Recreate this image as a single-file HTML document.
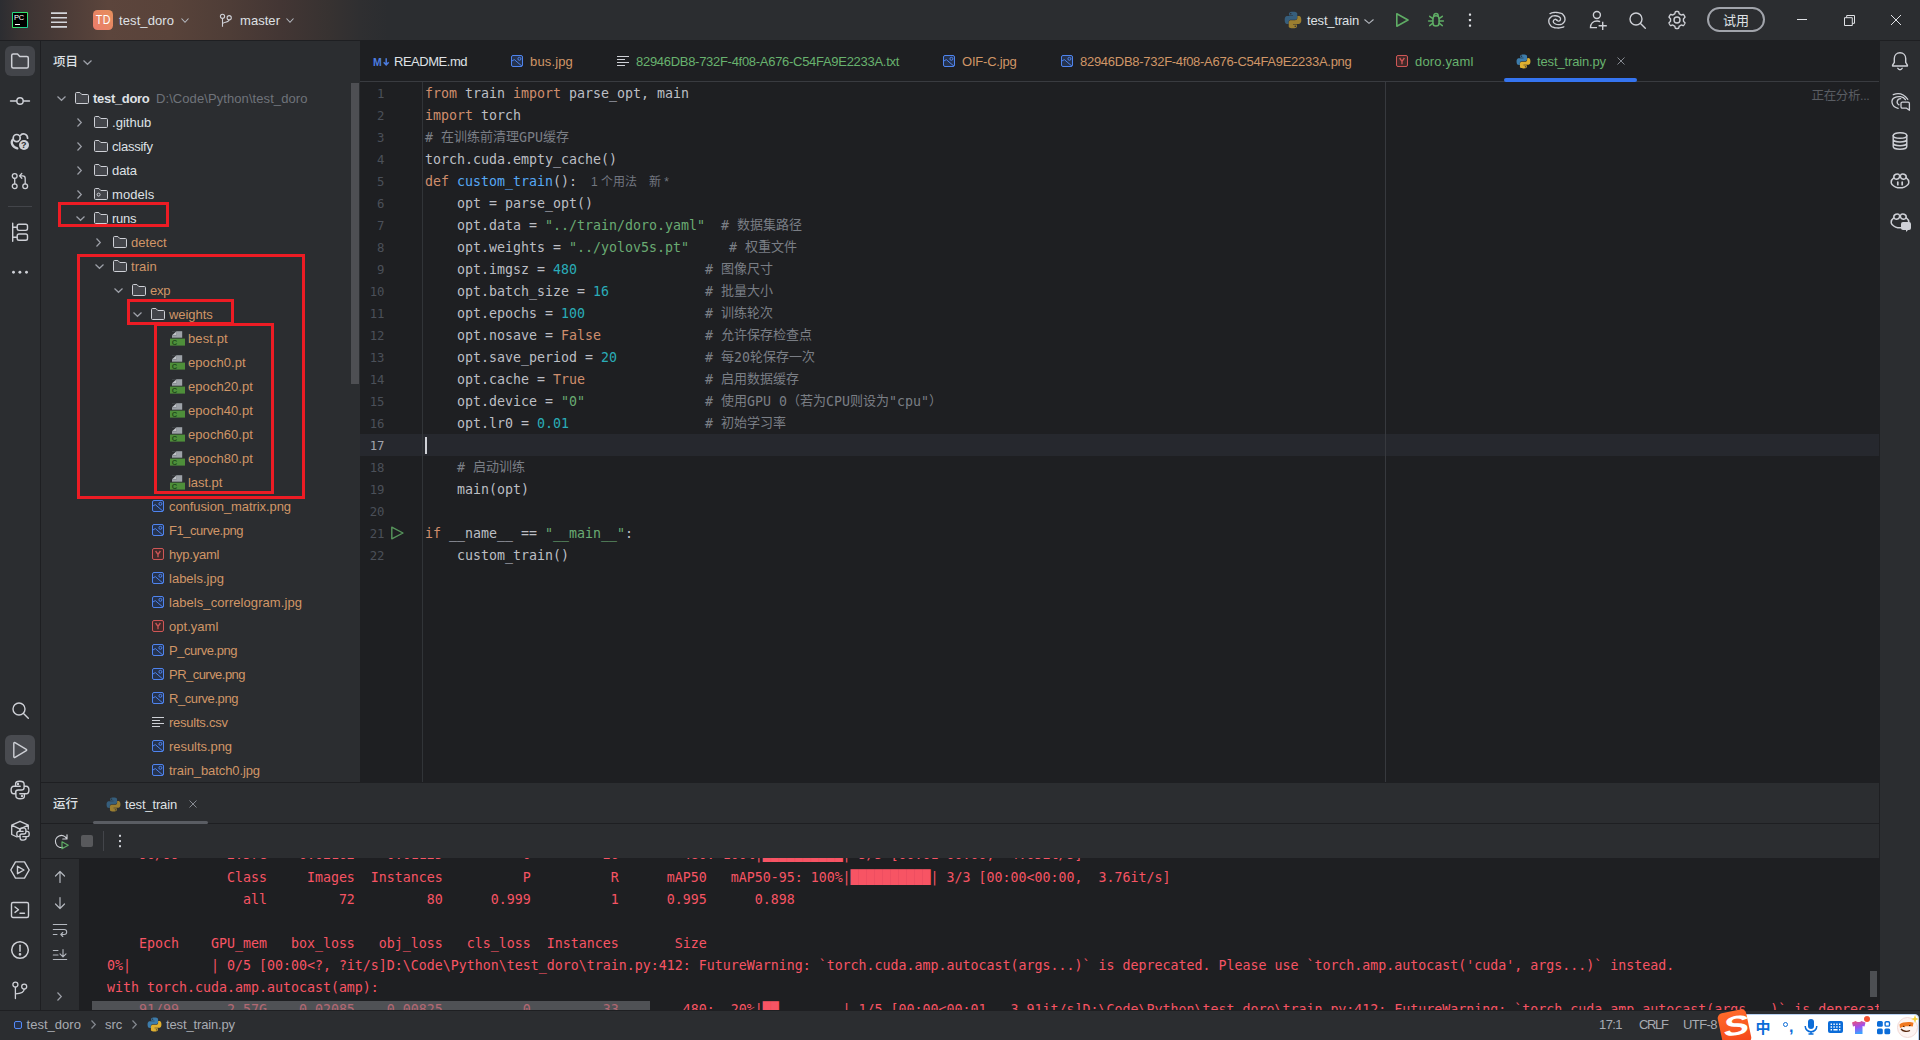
<!DOCTYPE html>
<html lang="zh"><head><meta charset="utf-8"><title>test_doro – test_train.py</title>
<style>
*{box-sizing:border-box;margin:0;padding:0}
html,body{width:1920px;height:1040px;overflow:hidden;background:#2b2d30}
body{position:relative;font-family:"Liberation Sans","Noto Sans CJK SC",sans-serif;font-size:13px;color:#dfe1e5;-webkit-font-smoothing:antialiased}
.a{position:absolute}
.t{position:absolute;white-space:pre;line-height:20px;height:20px}
.m{font-family:"DejaVu Sans Mono","Noto Sans CJK SC",monospace;font-size:13.29px}
.code{position:absolute;left:425px;white-space:pre;height:22px;line-height:22px;color:#bcbec4}
.code span.z{font-size:13px;position:relative;top:-0.6px}
.ln{position:absolute;left:360px;width:24.5px;text-align:right;height:22px;line-height:22px;color:#4b5059}
.con{position:absolute;left:91px;white-space:pre;height:22px;line-height:22px;color:#f75464}
.k{color:#cf8e6d}.s{color:#6aab73}.n{color:#2aacb8}.c{color:#7a7e85}.f{color:#56a8f5}.h{color:#727680;font-family:"Liberation Sans","Noto Sans CJK SC",sans-serif;font-size:12px}
svg{position:absolute;overflow:visible}
</style></head><body>
<div class="a" style="left:0px;top:0px;width:1920px;height:40px;background:linear-gradient(90deg,#2c2d31 0px,#3a3333 20px,#4a3b37 60px,#5c453c 108px,#59433a 170px,#4e3d37 230px,#433634 280px,#373231 330px,#2f2f31 360px,#2b2d30 388px);"></div>
<div class="a" style="left:0px;top:40px;width:1920px;height:1px;background:#1e1f22;"></div>
<div class="a" style="left:0px;top:41px;width:40px;height:969px;background:#2b2d30;"></div>
<div class="a" style="left:40px;top:41px;width:1px;height:969px;background:#1e1f22;"></div>
<div class="a" style="left:41px;top:41px;width:319px;height:741px;background:#2b2d30;"></div>
<div class="a" style="left:360px;top:41px;width:1520px;height:741px;background:#1e1f22;"></div>
<div class="a" style="left:360px;top:81px;width:1520px;height:1px;background:#393b40;"></div>
<div class="a" style="left:1880px;top:41px;width:40px;height:969px;background:#2b2d30;"></div>
<div class="a" style="left:1879px;top:41px;width:1px;height:969px;background:#1e1f22;"></div>
<div class="a" style="left:41px;top:782px;width:1838px;height:1px;background:#1e1f22;"></div>
<div class="a" style="left:41px;top:783px;width:1838px;height:227px;background:#2b2d30;"></div>
<div class="a" style="left:41px;top:823px;width:1838px;height:1px;background:#1e1f22;"></div>
<div class="a" style="left:79px;top:858px;width:1800px;height:152px;background:#1e1f22;"></div>
<div class="a" style="left:0px;top:1010px;width:1920px;height:1px;background:#1e1f22;"></div>
<div class="a" style="left:0px;top:1011px;width:1920px;height:29px;background:#2b2d30;"></div>
<!-- title bar -->
<div class="a" style="left:12px;top:12px;width:16px;height:16px;background:linear-gradient(135deg,#21d789,#3bea62 50%,#17c9a0);border-radius:1px"></div><div class="a" style="left:13px;top:13px;width:14px;height:14px;background:#000"></div><div class="a" style="left:14px;top:12.5px;font-size:7.500px;line-height:9px;color:#fff;letter-spacing:-0.200px">PC</div><div class="a" style="left:15px;top:24px;width:5px;height:1px;background:#fff;"></div>
<svg style="left:51px;top:12px" width="16" height="16" viewBox="0 0 16 16" fill="none"><path d="M0 1.100H16M0 5.800H16M0 10.200H16M0 14.900H16" stroke="#d4d6db" stroke-width="1.600"/></svg>
<div class="a" style="left:93px;top:10px;width:20px;height:20px;border-radius:4.5px;background:linear-gradient(45deg,#ea7c6c,#e58f5b);color:#fff;font-size:13px;line-height:20px;text-align:center;letter-spacing:0.6px"><span style="display:inline-block;transform:scaleX(0.82)">TD</span></div>
<div class="t " style="left:119px;top:11px;color:#dfe1e5;letter-spacing:0.1px;">test_doro</div>
<svg style="left:180.5px;top:18.0px" width="8" height="5" viewBox="0 0 8 5" fill="none"><path d="M0.5 0.5 L4.0 4.3 L7.5 0.5" stroke="#b4b8bf" stroke-width="1.1"/></svg>
<svg style="left:219px;top:12px" width="14" height="16" viewBox="0 0 14 16" fill="none"><circle cx="3.500" cy="4.300" r="2.100" stroke="#ced0d6" stroke-width="1.100"/><circle cx="10.200" cy="5.700" r="2.100" stroke="#ced0d6" stroke-width="1.100"/><path d="M3.500 6.400V14.800M10.200 7.800c0 3.200-6.700 1.600-6.700 4.200" stroke="#ced0d6" stroke-width="1.100"/></svg>
<div class="t " style="left:240px;top:11px;color:#dfe1e5;letter-spacing:0.05px;">master</div>
<svg style="left:286px;top:18.0px" width="8" height="5" viewBox="0 0 8 5" fill="none"><path d="M0.5 0.5 L4.0 4.3 L7.5 0.5" stroke="#b4b8bf" stroke-width="1.1"/></svg>
<svg style="left:1284px;top:11px" width="18" height="18" viewBox="0 0 16 16" fill="none"><g opacity="0.62"><path d="M7.9 0.6c-3.6 0-3.4 1.6-3.4 1.6v1.7h3.5v.6H3.1S0.6 4.2 0.6 8s2.2 3.6 2.2 3.6h1.3V9.9s-.1-2.2 2.1-2.2h3.6s2 0 2-2V2.500S12.200 0.600 7.900 0.600zM6 1.700a.65.65 0 1 1 0 1.300.65.65 0 0 1 0-1.300z" fill="#3d7cab"/><path d="M8.100 15.400c3.600 0 3.400-1.600 3.400-1.600v-1.700H8v-.6h4.900s2.500.300 2.500-3.500-2.200-3.600-2.200-3.600h-1.300v1.700s.1 2.200-2.100 2.200H6.200s-2 0-2 2v3.200s-.4 1.900 3.900 1.900zm1.900-1.100a.65.65 0 1 1 0-1.300.65.65 0 0 1 0 1.300z" fill="#e0b030"/></g></svg>
<div class="t " style="left:1307px;top:11px;color:#dfe1e5;letter-spacing:-0.15px;">test_train</div>
<svg style="left:1364px;top:18.5px" width="10" height="5" viewBox="0 0 10 5" fill="none"><path d="M0.5 0.5 L5.0 4.3 L9.5 0.5" stroke="#b4b8bf" stroke-width="1.1"/></svg>
<svg style="left:1394px;top:12px" width="16" height="16" viewBox="0 0 16 16" fill="none"><path d="M2.800 1.800L14 8L2.800 14.200Z" stroke="#5fad65" stroke-width="1.600" stroke-linejoin="round"/></svg>
<svg style="left:1427px;top:12px" width="18" height="16" viewBox="0 0 18 16" fill="none"><g stroke="#5fad65" stroke-width="1.500" fill="none" stroke-linecap="round"><rect x="5.900" y="3.700" width="6.200" height="10.300" rx="3.100"/><path d="M6.800 3.900C6.800 0.800 11.200 0.800 11.200 3.900"/><path d="M5.900 6.700L2.700 4.300M12.100 6.700L15.300 4.300M5.900 8.900H1.600M12.100 8.900H16.400M5.900 11.200L2.700 13.600M12.100 11.200L15.300 13.600"/></g></svg>
<svg style="left:1468px;top:12px" width="4" height="16" viewBox="0 0 4 16" fill="none"><rect x="0.900" y="1.500" width="2.200" height="2.200" rx="0.600" fill="#dfe1e5"/><rect x="0.900" y="7" width="2.200" height="2.200" rx="0.600" fill="#dfe1e5"/><rect x="0.900" y="12.500" width="2.200" height="2.200" rx="0.600" fill="#dfe1e5"/></svg>
<svg style="left:1548px;top:11px" width="18" height="18" viewBox="0 0 18 18" fill="none"><g stroke="#ced0d6" stroke-width="1.35" fill="none" stroke-linecap="round"><path d="M2.00 2.60C3.00 2.30 2.78 2.07 5.00 1.70C7.22 1.33 6.17 1.33 8.67 1.50C11.17 1.67 10.29 1.37 12.50 2.20C14.71 3.03 13.80 2.01 15.30 4.00C16.80 5.99 17.00 5.54 17.00 8.17C17.00 10.80 17.10 10.09 15.30 11.90C13.50 13.71 14.37 13.32 11.60 13.60C8.83 13.88 9.10 13.87 7.00 12.75C4.90 11.63 5.30 11.73 5.30 10.25C5.30 8.77 5.80 8.65 7.00 8.30C8.20 7.95 8.27 8.90 8.90 9.20"/><path d="M15.80 15.80C14.80 16.10 15.02 16.33 12.80 16.70C10.58 17.07 11.63 17.07 9.13 16.90C6.63 16.73 7.51 17.03 5.30 16.20C3.09 15.37 4.00 16.39 2.50 14.40C1.00 12.41 0.80 12.86 0.80 10.23C0.80 7.60 0.70 8.31 2.50 6.50C4.30 4.69 3.43 5.08 6.20 4.80C8.97 4.52 8.70 4.53 10.80 5.65C12.90 6.77 12.50 6.67 12.50 8.15C12.50 9.63 12.00 9.75 10.80 10.10C9.60 10.45 9.53 9.50 8.90 9.20"/></g></svg>
<svg style="left:1588px;top:10px" width="20" height="20" viewBox="0 0 20 20" fill="none"><g stroke="#ced0d6" stroke-width="1.4" fill="none"><circle cx="8.9" cy="5" r="3.500"/><path d="M9 17.600H2.500c0-4.200 2.800-6.600 6.600-6.600 1.100 0 2.100.2 3 .6M14.700 11.700v8.300M10.600 15.700h8.200"/></g></svg>
<svg style="left:1628px;top:11px" width="19" height="19" viewBox="0 0 19 19" fill="none"><g stroke="#ced0d6" stroke-width="1.4" fill="none" stroke-linecap="round"><circle cx="8" cy="8" r="6"/><path d="M12.500 12.500L17.300 17.300"/></g></svg>
<svg style="left:1667px;top:10px" width="20" height="20" viewBox="0 0 20 20" fill="none"><path d="M16.50 10.00 L16.49 10.28 L16.48 10.57 L16.44 10.85 L16.40 11.13 L16.77 11.50 L17.24 11.94 L17.70 12.43 L17.99 12.91 L17.85 13.25 L17.70 13.59 L17.54 13.92 L17.36 14.25 L17.17 14.57 L16.96 14.88 L16.74 15.17 L16.51 15.46 L15.95 15.45 L15.30 15.30 L14.68 15.11 L14.18 14.98 L13.96 15.16 L13.73 15.32 L13.49 15.48 L13.25 15.63 L13.00 15.77 L12.75 15.89 L12.49 16.01 L12.22 16.11 L12.08 16.61 L11.94 17.24 L11.75 17.88 L11.48 18.37 L11.11 18.43 L10.74 18.47 L10.37 18.49 L10.00 18.50 L9.63 18.49 L9.26 18.47 L8.89 18.43 L8.52 18.37 L8.25 17.88 L8.06 17.24 L7.92 16.61 L7.78 16.11 L7.51 16.01 L7.25 15.89 L7.00 15.77 L6.75 15.63 L6.51 15.48 L6.27 15.32 L6.04 15.16 L5.82 14.98 L5.32 15.11 L4.70 15.30 L4.05 15.45 L3.49 15.46 L3.26 15.17 L3.04 14.88 L2.83 14.57 L2.64 14.25 L2.46 13.92 L2.30 13.59 L2.15 13.25 L2.01 12.91 L2.30 12.43 L2.76 11.94 L3.23 11.50 L3.60 11.13 L3.56 10.85 L3.52 10.57 L3.51 10.28 L3.50 10.00 L3.51 9.72 L3.52 9.43 L3.56 9.15 L3.60 8.87 L3.23 8.50 L2.76 8.06 L2.30 7.57 L2.01 7.09 L2.15 6.75 L2.30 6.41 L2.46 6.08 L2.64 5.75 L2.83 5.43 L3.04 5.12 L3.26 4.83 L3.49 4.54 L4.05 4.55 L4.70 4.70 L5.32 4.89 L5.82 5.02 L6.04 4.84 L6.27 4.68 L6.51 4.52 L6.75 4.37 L7.00 4.23 L7.25 4.11 L7.51 3.99 L7.78 3.89 L7.92 3.39 L8.06 2.76 L8.25 2.12 L8.52 1.63 L8.89 1.57 L9.26 1.53 L9.63 1.51 L10.00 1.50 L10.37 1.51 L10.74 1.53 L11.11 1.57 L11.48 1.63 L11.75 2.12 L11.94 2.76 L12.08 3.39 L12.22 3.89 L12.49 3.99 L12.75 4.11 L13.00 4.23 L13.25 4.37 L13.49 4.52 L13.73 4.68 L13.96 4.84 L14.18 5.02 L14.68 4.89 L15.30 4.70 L15.95 4.55 L16.51 4.54 L16.74 4.83 L16.96 5.12 L17.17 5.43 L17.36 5.75 L17.54 6.08 L17.70 6.41 L17.85 6.75 L17.99 7.09 L17.70 7.57 L17.24 8.06 L16.77 8.50 L16.40 8.87 L16.44 9.15 L16.48 9.43 L16.49 9.72Z" stroke="#ced0d6" stroke-width="1.400" stroke-linejoin="round" fill="none"/><circle cx="10" cy="10" r="3" stroke="#ced0d6" stroke-width="1.400" fill="none"/></svg>
<div class="a" style="left:1707px;top:7px;width:58px;height:25px;border:2px solid #a1a4ab;border-radius:13px"></div>
<div class="t " style="left:1723px;top:11px;color:#dfe1e5;">试用</div>
<div class="a" style="left:1797px;top:19px;width:10px;height:1px;background:#dfe1e5;"></div>
<svg style="left:1843.5px;top:14.5px" width="11" height="11" viewBox="0 0 11 11" fill="none"><path d="M0.500 2.700h7.800v7.800h-7.800z M2.700 2.700v-2.200h7.800v7.800h-2.200" stroke="#dfe1e5" stroke-width="1" fill="none"/></svg>
<svg style="left:1891px;top:15px" width="10" height="10" viewBox="0 0 10 10" fill="none"><path d="M0 0L10 10M10 0L0 10" stroke="#dfe1e5" stroke-width="1"/></svg>
<!-- tool strips -->
<div class="a" style="left:5px;top:46px;width:30px;height:30px;background:#43454a;border-radius:6px"></div>
<svg style="left:10px;top:51px" width="20" height="20" viewBox="0 0 20 20" fill="none"><g stroke="#ced0d6" stroke-width="1.5" fill="none" stroke-linecap="round" stroke-linejoin="round"><path d="M1.7 4.500a1.500 1.500 0 0 1 1.500-1.500h4.300l2.300 2.500h7a1.500 1.500 0 0 1 1.500 1.500v8.500a1.500 1.500 0 0 1-1.500 1.500H3.200a1.500 1.500 0 0 1-1.500-1.500z"/></g></svg>
<svg style="left:10px;top:91px" width="20" height="20" viewBox="0 0 20 20" fill="none"><g stroke="#ced0d6" stroke-width="1.4" fill="none" stroke-linecap="round" stroke-linejoin="round"><path d="M0.500 10H6.700M13.300 10H19.500"/><circle cx="10" cy="10" r="3.200"/></g></svg>
<svg style="left:10px;top:131px" width="20" height="20" viewBox="0 0 20 20" fill="none"><g stroke="#ced0d6" stroke-width="1.7" fill="none" stroke-linecap="round" stroke-linejoin="round"><ellipse cx="6.700" cy="7.100" rx="3.500" ry="3.600"/><path d="M10.600 4.300C11.800 2 17.600 2.200 17.600 7.200"/><path d="M2.700 8.800C0.600 11.500 2 16 7.300 17.400" stroke-width="2.300"/></g></svg>
<div class="a" style="left:17.500px;top:138.500px;width:12.500px;height:12.500px;border-radius:7px;background:#2b2d30"></div><div class="a" style="left:18.500px;top:139.500px;width:10.500px;height:10.500px;border-radius:6px;background:#ced0d6;color:#2b2d30;font-size:9px;font-weight:bold;line-height:10.500px;text-align:center">?</div>
<svg style="left:10px;top:171px" width="20" height="20" viewBox="0 0 20 20" fill="none"><g stroke="#ced0d6" stroke-width="1.3" fill="none" stroke-linecap="round" stroke-linejoin="round"><circle cx="4.700" cy="5" r="2.400"/><circle cx="4.700" cy="15.200" r="2.400"/><circle cx="15.200" cy="15.200" r="2.400"/><path d="M4.700 7.400V12.800M15.200 12.800V7.500c0-1.700-1-2.600-2.600-2.600H10M11.800 2.500L9.500 4.900l2.300 2.400"/></g></svg>
<div class="a" style="left:8px;top:206px;width:24px;height:1px;background:#43454a;"></div>
<svg style="left:10px;top:222px" width="20" height="20" viewBox="0 0 20 20" fill="none"><g stroke="#ced0d6" stroke-width="1.4" fill="none" stroke-linecap="round" stroke-linejoin="round"><path d="M2.700 1.200V19.200M2.700 5.300H7M2.700 15.200H7"/><rect x="7.200" y="2.200" width="10.300" height="6.200" rx="1.800"/><rect x="7.200" y="12" width="10.300" height="6.200" rx="1.800"/></g></svg>
<svg style="left:10px;top:268px" width="20" height="8" viewBox="0 0 20 8" fill="none"><circle cx="3.500" cy="4.200" r="1.450" fill="#ced0d6"/><circle cx="9.900" cy="4.200" r="1.450" fill="#ced0d6"/><circle cx="16.500" cy="4.200" r="1.450" fill="#ced0d6"/></svg>

<svg style="left:10px;top:700px" width="20" height="20" viewBox="0 0 20 20" fill="none"><g stroke="#ced0d6" stroke-width="1.4" fill="none" stroke-linecap="round" stroke-linejoin="round"><circle cx="9" cy="9" r="6"/><path d="M13.500 13.500L18.300 18.300"/></g></svg>
<div class="a" style="left:5px;top:735px;width:30px;height:30px;background:#494b50;border-radius:6px"></div>
<svg style="left:10px;top:740px" width="20" height="20" viewBox="0 0 20 20" fill="none"><g stroke="#ced0d6" stroke-width="1.4" fill="none" stroke-linecap="round" stroke-linejoin="round"><path d="M3.800 3.300c0-.6.600-1 1.200-.7l11.300 6.700c.5.300.5 1 0 1.300L5 17.400c-.6.300-1.200-.1-1.200-.7z"/></g></svg>
<svg style="left:10px;top:780px" width="20" height="20" viewBox="0 0 20 20" fill="none"><g stroke="#ced0d6" stroke-width="1.4" fill="none" stroke-linecap="round" stroke-linejoin="round"><path d="M9.800 1.200c-2.600 0-4.200.7-4.200 2.600v2.400h4.600M9.800 1.200c2.600 0 4.300.8 4.300 2.700v3.500c0 1.500-1 2.600-2.700 2.600H8.300c-1.700 0-2.800 1.100-2.800 2.700M5.600 6.200H3.900c-1.700 0-2.800 1.400-2.800 3.800s1.100 3.800 2.800 3.800h1.600v-1.100M10.200 18.800c2.600 0 4.200-.7 4.200-2.600v-2.400H9.800M10.200 18.800c-2.600 0-4.300-.8-4.300-2.700v-3.500M14.400 13.800h1.700c1.700 0 2.800-1.400 2.800-3.800s-1.100-3.800-2.800-3.800h-1.600"/><circle cx="8" cy="3.900" r=".5" fill="#ced0d6"/><circle cx="12" cy="16.100" r=".5" fill="#ced0d6"/></g></svg>
<svg style="left:10px;top:820px" width="20" height="20" viewBox="0 0 20 20" fill="none"><g stroke="#ced0d6" stroke-width="1.3" fill="none" stroke-linecap="round" stroke-linejoin="round"><path d="M10 1.300L18.300 5.200V9M10 1.300L1.700 5.200V14.500L7 17M1.700 5.200L10 9.200L18.300 5.200M10 9.200V11"/></g></svg>
<svg style="left:16px;top:827px" width="14" height="14" viewBox="0 0 20 20" fill="none"><g stroke="#ced0d6" stroke-width="1.9" fill="none" stroke-linecap="round" stroke-linejoin="round"><path d="M9.800 1.200c-2.600 0-4.200.7-4.200 2.600v2.400h4.600M9.800 1.200c2.600 0 4.300.8 4.300 2.700v3.500c0 1.500-1 2.600-2.700 2.600H8.300c-1.700 0-2.800 1.100-2.800 2.700M5.600 6.200H3.900c-1.700 0-2.800 1.400-2.800 3.800s1.100 3.800 2.800 3.800h1.600v-1.100M10.200 18.800c2.600 0 4.200-.7 4.200-2.600v-2.400H9.800M10.200 18.800c-2.600 0-4.300-.8-4.300-2.700v-3.500M14.400 13.800h1.700c1.700 0 2.800-1.400 2.800-3.800s-1.100-3.800-2.800-3.800h-1.600"/></g></svg>
<svg style="left:10px;top:860px" width="20" height="20" viewBox="0 0 20 20" fill="none"><g stroke="#ced0d6" stroke-width="1.4" fill="none" stroke-linecap="round" stroke-linejoin="round"><path d="M5.500 1.900H14.500L19.200 10L14.500 18.100H5.500L0.800 10Z"/><path d="M7.500 6.300L14 10L7.500 13.700Z"/></g></svg>
<svg style="left:10px;top:900px" width="20" height="20" viewBox="0 0 20 20" fill="none"><g stroke="#ced0d6" stroke-width="1.4" fill="none" stroke-linecap="round" stroke-linejoin="round"><rect x="1.500" y="2.500" width="17" height="15" rx="1.500"/><path d="M5 7L8.500 9.700L5 12.400M10 13.300H14.500"/></g></svg>
<svg style="left:10px;top:940px" width="20" height="20" viewBox="0 0 20 20" fill="none"><g stroke="#ced0d6" stroke-width="1.5" fill="none" stroke-linecap="round" stroke-linejoin="round"><circle cx="10" cy="10" r="8.300"/><path d="M10 5.300V11.300"/><circle cx="10" cy="14.300" r=".6" fill="#ced0d6"/></g></svg>
<svg style="left:10px;top:978px" width="20" height="22" viewBox="0 0 20 22" fill="none"><g stroke="#ced0d6" stroke-width="1.3" fill="none" stroke-linecap="round" stroke-linejoin="round"><circle cx="5.400" cy="6.600" r="2.500"/><circle cx="14.200" cy="8.600" r="2.500"/><path d="M5.400 9.100V20.500M14.200 11.100c0 3.500-4 4.700-8.800 4.700"/></g></svg>
<svg style="left:1890px;top:51px" width="20" height="20" viewBox="0 0 20 20" fill="none"><g stroke="#ced0d6" stroke-width="1.4" fill="none" stroke-linecap="round" stroke-linejoin="round"><path d="M10 1.800c-3.300 0-5.700 2.500-5.700 5.800v3.800L2.600 14.200v.8H17.400v-.8L15.700 11.400V7.600c0-3.300-2.400-5.800-5.700-5.800z"/><path d="M7.800 17.300c.4.900 1.200 1.400 2.200 1.400s1.800-.5 2.200-1.400"/></g></svg>
<svg style="left:1890px;top:91px" width="20" height="20" viewBox="0 0 20 20" fill="none"><g stroke="#ced0d6" stroke-width="1.3" fill="none" stroke-linecap="round" stroke-linejoin="round"><path d="M3.300 3.700Q11.500 0.100 17.800 8.300"/><path d="M8.100 17.400C1.200 15.700 0.300 8.700 4.600 6.600C8.100 4.800 13.300 5.300 15.400 8.700"/><path d="M10.700 7.700C6.800 7.900 5.900 12.200 9 13.800"/><path d="M12.400 11.100H18a1.400 1.400 0 0 1 1.400 1.400V19.300L16.600 17.200H12.400a1.400 1.400 0 0 1-1.400-1.400V12.500a1.400 1.400 0 0 1 1.400-1.400Z" fill="#2b2d30"/></g></svg>
<svg style="left:1890px;top:131px" width="20" height="20" viewBox="0 0 20 20" fill="none"><g stroke="#ced0d6" stroke-width="1.4" fill="none" stroke-linecap="round" stroke-linejoin="round"><ellipse cx="10" cy="4.500" rx="6.800" ry="2.800"/><path d="M3.200 4.500v11c0 1.500 3 2.800 6.800 2.800s6.800-1.300 6.800-2.800v-11M3.200 8.200c0 1.500 3 2.800 6.800 2.800s6.800-1.300 6.800-2.800M3.200 11.900c0 1.500 3 2.800 6.800 2.800s6.800-1.300 6.800-2.800"/></g></svg>
<svg style="left:1890px;top:171px" width="20" height="20" viewBox="0 0 20 20" fill="none"><g stroke="#ced0d6" stroke-width="1.5" fill="none" stroke-linecap="round" stroke-linejoin="round"><path d="M5.800 3.300c1.700-.5 3.300-.2 3.700 1.100.4 1.500-.4 3.200-2.100 3.600-1.700.4-3.100 0-3.500-1.400-.3-1.400.4-2.800 1.900-3.300zM14.200 3.300c-1.700-.5-3.300-.2-3.700 1.100-.4 1.500.4 3.200 2.100 3.600 1.700.4 3.100 0 3.500-1.400.3-1.400-.4-2.800-1.900-3.300z"/><path d="M3.700 6.800C2 8 1.200 9.300 1.200 11.200c0 1 .3 1.700.8 2.200 2 2.100 5 3.400 8 3.400s6-1.300 8-3.400c.5-.5.800-1.200.8-2.200 0-1.900-.8-3.200-2.500-4.400"/><path d="M7.800 11.200v2.500M12.200 11.200v2.500" stroke-width="1.700"/></g></svg>
<svg style="left:1890px;top:211px" width="20" height="20" viewBox="0 0 20 20" fill="none"><g stroke="#ced0d6" stroke-width="1.5" fill="none" stroke-linecap="round" stroke-linejoin="round"><path d="M5.800 3.300c1.700-.5 3.300-.2 3.700 1.100.4 1.500-.4 3.200-2.100 3.600-1.700.4-3.100 0-3.500-1.400-.3-1.400.4-2.800 1.900-3.300zM14.200 3.300c-1.700-.5-3.300-.2-3.700 1.100-.4 1.500.4 3.200 2.100 3.600 1.700.4 3.100 0 3.500-1.400.3-1.400-.4-2.800-1.900-3.300z"/><path d="M3.700 6.800C2 8 1.200 9.300 1.200 11.200c0 1 .3 1.700.8 2.200 2 2.100 5 3.400 8 3.400s6-1.300 8-3.400c.5-.5.800-1.200.8-2.200 0-1.900-.8-3.200-2.500-4.400"/></g></svg>
<div class="a" style="left:1901px;top:222px;width:10px;height:8px;border-radius:2px;background:#ced0d6"></div><div class="a" style="left:1906px;top:228px;width:0;height:0;border-left:4px solid #ced0d6;border-bottom:4px solid transparent"></div>
<!-- project panel -->
<div class="t " style="left:53px;top:52px;color:#dfe1e5;font-size:12.5px;font-weight:500;">项目</div>
<svg style="left:82.5px;top:59.5px" width="9" height="5" viewBox="0 0 9 5" fill="none"><path d="M0.5 0.5 L4.5 4.3 L8.5 0.5" stroke="#9da0a8" stroke-width="1.2"/></svg>
<div class="a" style="left:351px;top:83px;width:8px;height:301px;background:#4e4f53;"></div>
<svg style="left:56.5px;top:95.5px" width="9" height="5" viewBox="0 0 9 5" fill="none"><path d="M0.5 0.5 L4.5 4.3 L8.5 0.5" stroke="#9da0a8" stroke-width="1.2"/></svg>
<svg style="left:74px;top:90px" width="16" height="16" viewBox="0 0 16 16" fill="none"><path d="M1.5 3.6a1.1 1.1 0 0 1 1.1-1.1h3.3l1.9 2h5.6a1.1 1.1 0 0 1 1.1 1.1v6.8a1.1 1.1 0 0 1-1.1 1.1H2.6a1.1 1.1 0 0 1-1.1-1.1z" fill="#43454a" stroke="#ced0d6" stroke-width="1"/></svg>
<div class="t " style="left:93px;top:89px;color:#dfe1e5;letter-spacing:-0.304px;font-weight:bold;">test_doro</div>
<div class="t " style="left:156px;top:89px;color:#6f737a;letter-spacing:0.079px;">D:\Code\Python\test_doro</div>
<svg style="left:77.0px;top:117.5px" width="5" height="9" viewBox="0 0 5 9" fill="none"><path d="M0.5 0.5 L4.3 4.5 L0.5 8.5" stroke="#9da0a8" stroke-width="1.2"/></svg>
<svg style="left:93px;top:114px" width="16" height="16" viewBox="0 0 16 16" fill="none"><path d="M1.5 3.6a1.1 1.1 0 0 1 1.1-1.1h3.3l1.9 2h5.6a1.1 1.1 0 0 1 1.1 1.1v6.8a1.1 1.1 0 0 1-1.1 1.1H2.6a1.1 1.1 0 0 1-1.1-1.1z" fill="#43454a" stroke="#ced0d6" stroke-width="1"/></svg>
<div class="t " style="left:112px;top:113px;color:#dfe1e5;letter-spacing:0.036px;">.github</div>
<svg style="left:77.0px;top:141.5px" width="5" height="9" viewBox="0 0 5 9" fill="none"><path d="M0.5 0.5 L4.3 4.5 L0.5 8.5" stroke="#9da0a8" stroke-width="1.2"/></svg>
<svg style="left:93px;top:138px" width="16" height="16" viewBox="0 0 16 16" fill="none"><path d="M1.5 3.6a1.1 1.1 0 0 1 1.1-1.1h3.3l1.9 2h5.6a1.1 1.1 0 0 1 1.1 1.1v6.8a1.1 1.1 0 0 1-1.1 1.1H2.6a1.1 1.1 0 0 1-1.1-1.1z" fill="#43454a" stroke="#ced0d6" stroke-width="1"/></svg>
<div class="t " style="left:112px;top:137px;color:#dfe1e5;letter-spacing:-0.241px;">classify</div>
<svg style="left:77.0px;top:165.5px" width="5" height="9" viewBox="0 0 5 9" fill="none"><path d="M0.5 0.5 L4.3 4.5 L0.5 8.5" stroke="#9da0a8" stroke-width="1.2"/></svg>
<svg style="left:93px;top:162px" width="16" height="16" viewBox="0 0 16 16" fill="none"><path d="M1.5 3.6a1.1 1.1 0 0 1 1.1-1.1h3.3l1.9 2h5.6a1.1 1.1 0 0 1 1.1 1.1v6.8a1.1 1.1 0 0 1-1.1 1.1H2.6a1.1 1.1 0 0 1-1.1-1.1z" fill="#43454a" stroke="#ced0d6" stroke-width="1"/></svg>
<div class="t " style="left:112px;top:161px;color:#dfe1e5;letter-spacing:-0.078px;">data</div>
<svg style="left:77.0px;top:189.5px" width="5" height="9" viewBox="0 0 5 9" fill="none"><path d="M0.5 0.5 L4.3 4.5 L0.5 8.5" stroke="#9da0a8" stroke-width="1.2"/></svg>
<svg style="left:93px;top:186px" width="16" height="16" viewBox="0 0 16 16" fill="none"><path d="M1.5 3.6a1.1 1.1 0 0 1 1.1-1.1h3.3l1.9 2h5.6a1.1 1.1 0 0 1 1.1 1.1v6.8a1.1 1.1 0 0 1-1.1 1.1H2.6a1.1 1.1 0 0 1-1.1-1.1z" fill="#43454a" stroke="#ced0d6" stroke-width="1"/><circle cx="5.6" cy="8.6" r="1.5" stroke="#ced0d6" stroke-width="1" fill="none"/></svg>
<div class="t " style="left:112px;top:185px;color:#dfe1e5;letter-spacing:0.063px;">models</div>
<svg style="left:75.5px;top:215.5px" width="9" height="5" viewBox="0 0 9 5" fill="none"><path d="M0.5 0.5 L4.5 4.3 L8.5 0.5" stroke="#9da0a8" stroke-width="1.2"/></svg>
<svg style="left:93px;top:210px" width="16" height="16" viewBox="0 0 16 16" fill="none"><path d="M1.5 3.6a1.1 1.1 0 0 1 1.1-1.1h3.3l1.9 2h5.6a1.1 1.1 0 0 1 1.1 1.1v6.8a1.1 1.1 0 0 1-1.1 1.1H2.6a1.1 1.1 0 0 1-1.1-1.1z" fill="#43454a" stroke="#ced0d6" stroke-width="1"/></svg>
<div class="t " style="left:112px;top:209px;color:#dfe1e5;letter-spacing:-0.249px;">runs</div>
<svg style="left:96.0px;top:237.5px" width="5" height="9" viewBox="0 0 5 9" fill="none"><path d="M0.5 0.5 L4.3 4.5 L0.5 8.5" stroke="#9da0a8" stroke-width="1.2"/></svg>
<svg style="left:112px;top:234px" width="16" height="16" viewBox="0 0 16 16" fill="none"><path d="M1.5 3.6a1.1 1.1 0 0 1 1.1-1.1h3.3l1.9 2h5.6a1.1 1.1 0 0 1 1.1 1.1v6.8a1.1 1.1 0 0 1-1.1 1.1H2.6a1.1 1.1 0 0 1-1.1-1.1z" fill="#43454a" stroke="#ced0d6" stroke-width="1"/></svg>
<div class="t " style="left:131px;top:233px;color:#d09667;letter-spacing:0.046px;">detect</div>
<svg style="left:94.5px;top:263.5px" width="9" height="5" viewBox="0 0 9 5" fill="none"><path d="M0.5 0.5 L4.5 4.3 L8.5 0.5" stroke="#9da0a8" stroke-width="1.2"/></svg>
<svg style="left:112px;top:258px" width="16" height="16" viewBox="0 0 16 16" fill="none"><path d="M1.5 3.6a1.1 1.1 0 0 1 1.1-1.1h3.3l1.9 2h5.6a1.1 1.1 0 0 1 1.1 1.1v6.8a1.1 1.1 0 0 1-1.1 1.1H2.6a1.1 1.1 0 0 1-1.1-1.1z" fill="#43454a" stroke="#ced0d6" stroke-width="1"/></svg>
<div class="t " style="left:131px;top:257px;color:#d09667;letter-spacing:0.081px;">train</div>
<svg style="left:113.5px;top:287.5px" width="9" height="5" viewBox="0 0 9 5" fill="none"><path d="M0.5 0.5 L4.5 4.3 L8.5 0.5" stroke="#9da0a8" stroke-width="1.2"/></svg>
<svg style="left:131px;top:282px" width="16" height="16" viewBox="0 0 16 16" fill="none"><path d="M1.5 3.6a1.1 1.1 0 0 1 1.1-1.1h3.3l1.9 2h5.6a1.1 1.1 0 0 1 1.1 1.1v6.8a1.1 1.1 0 0 1-1.1 1.1H2.6a1.1 1.1 0 0 1-1.1-1.1z" fill="#43454a" stroke="#ced0d6" stroke-width="1"/></svg>
<div class="t " style="left:150px;top:281px;color:#d09667;letter-spacing:-0.223px;">exp</div>
<svg style="left:132.5px;top:311.5px" width="9" height="5" viewBox="0 0 9 5" fill="none"><path d="M0.5 0.5 L4.5 4.3 L8.5 0.5" stroke="#9da0a8" stroke-width="1.2"/></svg>
<svg style="left:150px;top:306px" width="16" height="16" viewBox="0 0 16 16" fill="none"><path d="M1.5 3.6a1.1 1.1 0 0 1 1.1-1.1h3.3l1.9 2h5.6a1.1 1.1 0 0 1 1.1 1.1v6.8a1.1 1.1 0 0 1-1.1 1.1H2.6a1.1 1.1 0 0 1-1.1-1.1z" fill="#43454a" stroke="#ced0d6" stroke-width="1"/></svg>
<div class="t " style="left:169px;top:305px;color:#d09667;letter-spacing:-0.054px;">weights</div>
<svg style="left:169.8px;top:330.4px" width="16" height="16" viewBox="0 0 16 16" fill="none"><rect x="0" y="8.6" width="15" height="7" fill="#4e8f3a"/><path d="M2 1.200h10.200v6.500h-10.200z" fill="#9da2a8"/><path d="M2 1.200h4.600v4.100h-4.600z" fill="#2b2d30"/><path d="M6.600 1.200v4.100h-4.600z" fill="#bfc3c8"/><text x="1.8" y="14.9" font-family="Liberation Sans,sans-serif" font-size="7.5" font-weight="bold" fill="#1f4a1a">C</text></svg>
<div class="t " style="left:188px;top:329px;color:#d09667;letter-spacing:0.096px;">best.pt</div>
<svg style="left:169.8px;top:354.4px" width="16" height="16" viewBox="0 0 16 16" fill="none"><rect x="0" y="8.6" width="15" height="7" fill="#4e8f3a"/><path d="M2 1.200h10.200v6.500h-10.200z" fill="#9da2a8"/><path d="M2 1.200h4.600v4.100h-4.600z" fill="#2b2d30"/><path d="M6.600 1.200v4.100h-4.600z" fill="#bfc3c8"/><text x="1.8" y="14.9" font-family="Liberation Sans,sans-serif" font-size="7.5" font-weight="bold" fill="#1f4a1a">C</text></svg>
<div class="t " style="left:188px;top:353px;color:#d09667;letter-spacing:0.066px;">epoch0.pt</div>
<svg style="left:169.8px;top:378.4px" width="16" height="16" viewBox="0 0 16 16" fill="none"><rect x="0" y="8.6" width="15" height="7" fill="#4e8f3a"/><path d="M2 1.200h10.200v6.500h-10.200z" fill="#9da2a8"/><path d="M2 1.200h4.600v4.100h-4.600z" fill="#2b2d30"/><path d="M6.600 1.200v4.100h-4.600z" fill="#bfc3c8"/><text x="1.8" y="14.9" font-family="Liberation Sans,sans-serif" font-size="7.5" font-weight="bold" fill="#1f4a1a">C</text></svg>
<div class="t " style="left:188px;top:377px;color:#d09667;letter-spacing:0.066px;">epoch20.pt</div>
<svg style="left:169.8px;top:402.4px" width="16" height="16" viewBox="0 0 16 16" fill="none"><rect x="0" y="8.6" width="15" height="7" fill="#4e8f3a"/><path d="M2 1.200h10.200v6.500h-10.200z" fill="#9da2a8"/><path d="M2 1.200h4.600v4.100h-4.600z" fill="#2b2d30"/><path d="M6.600 1.200v4.100h-4.600z" fill="#bfc3c8"/><text x="1.8" y="14.9" font-family="Liberation Sans,sans-serif" font-size="7.5" font-weight="bold" fill="#1f4a1a">C</text></svg>
<div class="t " style="left:188px;top:401px;color:#d09667;letter-spacing:0.066px;">epoch40.pt</div>
<svg style="left:169.8px;top:426.4px" width="16" height="16" viewBox="0 0 16 16" fill="none"><rect x="0" y="8.6" width="15" height="7" fill="#4e8f3a"/><path d="M2 1.200h10.200v6.500h-10.200z" fill="#9da2a8"/><path d="M2 1.200h4.600v4.100h-4.600z" fill="#2b2d30"/><path d="M6.600 1.200v4.100h-4.600z" fill="#bfc3c8"/><text x="1.8" y="14.9" font-family="Liberation Sans,sans-serif" font-size="7.5" font-weight="bold" fill="#1f4a1a">C</text></svg>
<div class="t " style="left:188px;top:425px;color:#d09667;letter-spacing:0.066px;">epoch60.pt</div>
<svg style="left:169.8px;top:450.4px" width="16" height="16" viewBox="0 0 16 16" fill="none"><rect x="0" y="8.6" width="15" height="7" fill="#4e8f3a"/><path d="M2 1.200h10.200v6.500h-10.200z" fill="#9da2a8"/><path d="M2 1.200h4.600v4.100h-4.600z" fill="#2b2d30"/><path d="M6.600 1.200v4.100h-4.600z" fill="#bfc3c8"/><text x="1.8" y="14.9" font-family="Liberation Sans,sans-serif" font-size="7.5" font-weight="bold" fill="#1f4a1a">C</text></svg>
<div class="t " style="left:188px;top:449px;color:#d09667;letter-spacing:0.066px;">epoch80.pt</div>
<svg style="left:169.8px;top:474.4px" width="16" height="16" viewBox="0 0 16 16" fill="none"><rect x="0" y="8.6" width="15" height="7" fill="#4e8f3a"/><path d="M2 1.200h10.200v6.500h-10.200z" fill="#9da2a8"/><path d="M2 1.200h4.600v4.100h-4.600z" fill="#2b2d30"/><path d="M6.600 1.200v4.100h-4.600z" fill="#bfc3c8"/><text x="1.8" y="14.9" font-family="Liberation Sans,sans-serif" font-size="7.5" font-weight="bold" fill="#1f4a1a">C</text></svg>
<div class="t " style="left:188px;top:473px;color:#d09667;letter-spacing:-0.055px;">last.pt</div>
<svg style="left:150px;top:498px" width="16" height="16" viewBox="0 0 16 16" fill="none"><rect x="2.5" y="2.5" width="11" height="11" rx="1.5" fill="#25324d" stroke="#4f84ee"/><circle cx="10.400" cy="5.800" r="1.500" stroke="#4f84ee" fill="none"/><path d="M2.600 8.200L5.300 6.600L13 13.200" stroke="#4f84ee" fill="none"/></svg>
<div class="t " style="left:169px;top:497px;color:#d09667;letter-spacing:-0.079px;">confusion_matrix.png</div>
<svg style="left:150px;top:522px" width="16" height="16" viewBox="0 0 16 16" fill="none"><rect x="2.5" y="2.5" width="11" height="11" rx="1.5" fill="#25324d" stroke="#4f84ee"/><circle cx="10.400" cy="5.800" r="1.500" stroke="#4f84ee" fill="none"/><path d="M2.600 8.200L5.300 6.600L13 13.200" stroke="#4f84ee" fill="none"/></svg>
<div class="t " style="left:169px;top:521px;color:#d09667;letter-spacing:-0.458px;">F1_curve.png</div>
<svg style="left:150px;top:546px" width="16" height="16" viewBox="0 0 16 16" fill="none"><rect x="2.5" y="2.5" width="11" height="11" rx="1.5" fill="#402929" stroke="#cf5757"/><path d="M5.6 5 L8 8.3 L10.4 5 M8 8.3 V11.2" stroke="#cf5757" stroke-width="1.3" fill="none"/></svg>
<div class="t " style="left:169px;top:545px;color:#d09667;letter-spacing:-0.216px;">hyp.yaml</div>
<svg style="left:150px;top:570px" width="16" height="16" viewBox="0 0 16 16" fill="none"><rect x="2.5" y="2.5" width="11" height="11" rx="1.5" fill="#25324d" stroke="#4f84ee"/><circle cx="10.400" cy="5.800" r="1.500" stroke="#4f84ee" fill="none"/><path d="M2.600 8.200L5.300 6.600L13 13.200" stroke="#4f84ee" fill="none"/></svg>
<div class="t " style="left:169px;top:569px;color:#d09667;letter-spacing:0.006px;">labels.jpg</div>
<svg style="left:150px;top:594px" width="16" height="16" viewBox="0 0 16 16" fill="none"><rect x="2.5" y="2.5" width="11" height="11" rx="1.5" fill="#25324d" stroke="#4f84ee"/><circle cx="10.400" cy="5.800" r="1.500" stroke="#4f84ee" fill="none"/><path d="M2.600 8.200L5.300 6.600L13 13.200" stroke="#4f84ee" fill="none"/></svg>
<div class="t " style="left:169px;top:593px;color:#d09667;letter-spacing:0.067px;">labels_correlogram.jpg</div>
<svg style="left:150px;top:618px" width="16" height="16" viewBox="0 0 16 16" fill="none"><rect x="2.5" y="2.5" width="11" height="11" rx="1.5" fill="#402929" stroke="#cf5757"/><path d="M5.6 5 L8 8.3 L10.4 5 M8 8.3 V11.2" stroke="#cf5757" stroke-width="1.3" fill="none"/></svg>
<div class="t " style="left:169px;top:617px;color:#d09667;letter-spacing:0.02px;">opt.yaml</div>
<svg style="left:150px;top:642px" width="16" height="16" viewBox="0 0 16 16" fill="none"><rect x="2.5" y="2.5" width="11" height="11" rx="1.5" fill="#25324d" stroke="#4f84ee"/><circle cx="10.400" cy="5.800" r="1.500" stroke="#4f84ee" fill="none"/><path d="M2.600 8.200L5.300 6.600L13 13.200" stroke="#4f84ee" fill="none"/></svg>
<div class="t " style="left:169px;top:641px;color:#d09667;letter-spacing:-0.455px;">P_curve.png</div>
<svg style="left:150px;top:666px" width="16" height="16" viewBox="0 0 16 16" fill="none"><rect x="2.5" y="2.5" width="11" height="11" rx="1.5" fill="#25324d" stroke="#4f84ee"/><circle cx="10.400" cy="5.800" r="1.500" stroke="#4f84ee" fill="none"/><path d="M2.600 8.200L5.300 6.600L13 13.200" stroke="#4f84ee" fill="none"/></svg>
<div class="t " style="left:169px;top:665px;color:#d09667;letter-spacing:-0.533px;">PR_curve.png</div>
<svg style="left:150px;top:690px" width="16" height="16" viewBox="0 0 16 16" fill="none"><rect x="2.5" y="2.5" width="11" height="11" rx="1.5" fill="#25324d" stroke="#4f84ee"/><circle cx="10.400" cy="5.800" r="1.500" stroke="#4f84ee" fill="none"/><path d="M2.600 8.200L5.300 6.600L13 13.200" stroke="#4f84ee" fill="none"/></svg>
<div class="t " style="left:169px;top:689px;color:#d09667;letter-spacing:-0.429px;">R_curve.png</div>
<svg style="left:150px;top:714px" width="16" height="16" viewBox="0 0 16 16" fill="none"><path d="M2 4.5h12M2 7.5h8M2 10.5h12M2 13.5h8" stroke="#ced0d6" stroke-width="1" transform="translate(0,-1)"/></svg>
<div class="t " style="left:169px;top:713px;color:#d09667;letter-spacing:-0.246px;">results.csv</div>
<svg style="left:150px;top:738px" width="16" height="16" viewBox="0 0 16 16" fill="none"><rect x="2.5" y="2.5" width="11" height="11" rx="1.5" fill="#25324d" stroke="#4f84ee"/><circle cx="10.400" cy="5.800" r="1.500" stroke="#4f84ee" fill="none"/><path d="M2.600 8.200L5.300 6.600L13 13.200" stroke="#4f84ee" fill="none"/></svg>
<div class="t " style="left:169px;top:737px;color:#d09667;letter-spacing:-0.054px;">results.png</div>
<svg style="left:150px;top:762px" width="16" height="16" viewBox="0 0 16 16" fill="none"><rect x="2.5" y="2.5" width="11" height="11" rx="1.5" fill="#25324d" stroke="#4f84ee"/><circle cx="10.400" cy="5.800" r="1.500" stroke="#4f84ee" fill="none"/><path d="M2.600 8.200L5.300 6.600L13 13.200" stroke="#4f84ee" fill="none"/></svg>
<div class="t " style="left:169px;top:761px;color:#d09667;letter-spacing:-0.095px;">train_batch0.jpg</div>
<div class="a" style="left:58px;top:202px;width:111px;height:25px;border:3px solid #ed1c24"></div>
<div class="a" style="left:77px;top:254px;width:228px;height:245px;border:3px solid #ed1c24"></div>
<div class="a" style="left:127px;top:299px;width:107px;height:26px;border:3px solid #ed1c24"></div>
<div class="a" style="left:154px;top:323px;width:120px;height:171px;border:3px solid #ed1c24"></div>
<!-- editor tabs -->
<div class="t" style="left:373px;top:53.200px;font-size:10.500px;font-weight:bold;color:#4c7de0;line-height:18px;height:18px">M</div><svg style="left:383.3px;top:57.5px" width="6.4" height="8" viewBox="0 0 6.4 8" fill="none"><path d="M3.200 0.300V6.800M0.700 4.300L3.200 6.900L5.700 4.300" stroke="#4c7de0" stroke-width="1.500" fill="none"/></svg>
<div class="t " style="left:394px;top:52px;color:#dfe1e5;letter-spacing:-0.477px;">README.md</div>
<svg style="left:508.5px;top:53px" width="16" height="16" viewBox="0 0 16 16" fill="none"><rect x="2.5" y="2.5" width="11" height="11" rx="1.5" fill="#25324d" stroke="#4f84ee"/><circle cx="10.400" cy="5.800" r="1.500" stroke="#4f84ee" fill="none"/><path d="M2.600 8.200L5.300 6.600L13 13.200" stroke="#4f84ee" fill="none"/></svg>
<div class="t " style="left:530px;top:52px;color:#d09667;letter-spacing:0.154px;">bus.jpg</div>
<svg style="left:615px;top:53px" width="16" height="16" viewBox="0 0 16 16" fill="none"><path d="M2 4.5h12M2 7.5h8M2 10.5h12M2 13.5h8" stroke="#ced0d6" stroke-width="1" transform="translate(0,-1)"/></svg>
<div class="t " style="left:636px;top:52px;color:#68b26e;letter-spacing:-0.291px;">82946DB8-732F-4f08-A676-C54FA9E2233A.txt</div>
<svg style="left:941px;top:53px" width="16" height="16" viewBox="0 0 16 16" fill="none"><rect x="2.5" y="2.5" width="11" height="11" rx="1.5" fill="#25324d" stroke="#4f84ee"/><circle cx="10.400" cy="5.800" r="1.500" stroke="#4f84ee" fill="none"/><path d="M2.600 8.200L5.300 6.600L13 13.200" stroke="#4f84ee" fill="none"/></svg>
<div class="t " style="left:962px;top:52px;color:#d09667;letter-spacing:-0.205px;">OIF-C.jpg</div>
<svg style="left:1059px;top:53px" width="16" height="16" viewBox="0 0 16 16" fill="none"><rect x="2.5" y="2.5" width="11" height="11" rx="1.5" fill="#25324d" stroke="#4f84ee"/><circle cx="10.400" cy="5.800" r="1.500" stroke="#4f84ee" fill="none"/><path d="M2.600 8.200L5.300 6.600L13 13.200" stroke="#4f84ee" fill="none"/></svg>
<div class="t " style="left:1080px;top:52px;color:#d09667;letter-spacing:-0.277px;">82946DB8-732F-4f08-A676-C54FA9E2233A.png</div>
<svg style="left:1394px;top:53px" width="16" height="16" viewBox="0 0 16 16" fill="none"><rect x="2.5" y="2.5" width="11" height="11" rx="1.5" fill="#402929" stroke="#cf5757"/><path d="M5.6 5 L8 8.3 L10.4 5 M8 8.3 V11.2" stroke="#cf5757" stroke-width="1.3" fill="none"/></svg>
<div class="t " style="left:1415px;top:52px;color:#68b26e;letter-spacing:0.158px;">doro.yaml</div>
<svg style="left:1516px;top:54px" width="15" height="15" viewBox="0 0 16 16" fill="none"><g opacity="1.0"><path d="M7.9 0.6c-3.6 0-3.4 1.6-3.4 1.6v1.7h3.5v.6H3.1S0.6 4.2 0.6 8s2.2 3.6 2.2 3.6h1.3V9.9s-.1-2.2 2.1-2.2h3.6s2 0 2-2V2.500S12.200 0.600 7.900 0.600zM6 1.700a.65.65 0 1 1 0 1.300.65.65 0 0 1 0-1.300z" fill="#3d7cab"/><path d="M8.100 15.400c3.600 0 3.400-1.600 3.400-1.600v-1.700H8v-.6h4.900s2.500.300 2.500-3.500-2.200-3.600-2.200-3.600h-1.300v1.700s.1 2.200-2.100 2.200H6.200s-2 0-2 2v3.200s-.4 1.900 3.900 1.900zm1.900-1.100a.65.65 0 1 1 0-1.300.65.65 0 0 1 0 1.300z" fill="#e0b030"/></g></svg>
<div class="t " style="left:1537px;top:52px;color:#68b26e;letter-spacing:-0.141px;">test_train.py</div>
<svg style="left:1617px;top:57px" width="8" height="8" viewBox="0 0 8 8" fill="none"><path d="M0.5 0.5 L7.5 7.5 M7.5 0.5 L0.5 7.5" stroke="#868a91" stroke-width="1"/></svg>
<div class="a" style="left:1504px;top:78px;width:133px;height:4px;background:#3574f0;border-radius:2px"></div>
<!-- editor -->
<div class="a" style="left:360px;top:434px;width:1519px;height:22px;background:#26282e;"></div>
<div class="a" style="left:422px;top:82px;width:1px;height:700px;background:#313438;"></div>
<div class="a" style="left:1385px;top:82px;width:1px;height:700px;background:#37393e;"></div>
<div class="a" style="left:425px;top:437px;width:2px;height:17px;background:#ced0d6;"></div>
<div class="ln m" style="top:82.5px;color:#4b5059;font-size:12.3px">1</div><div class="code m" style="top:83px"><span class="k">from</span> train <span class="k">import</span> parse_opt, main</div>
<div class="ln m" style="top:104.5px;color:#4b5059;font-size:12.3px">2</div><div class="code m" style="top:105px"><span class="k">import</span> torch</div>
<div class="ln m" style="top:126.5px;color:#4b5059;font-size:12.3px">3</div><div class="code m" style="top:127px"><span class="c"># <span class="z">在训练前清理</span>GPU<span class="z">缓存</span></span></div>
<div class="ln m" style="top:148.5px;color:#4b5059;font-size:12.3px">4</div><div class="code m" style="top:149px">torch.cuda.empty_cache()</div>
<div class="ln m" style="top:170.5px;color:#4b5059;font-size:12.3px">5</div><div class="code m" style="top:171px"><span class="k">def</span> <span class="f">custom_train</span>():<span class="h" style="margin-left:14px">1 个用法</span><span class="h" style="margin-left:12px">新 *</span></div>
<div class="ln m" style="top:192.5px;color:#4b5059;font-size:12.3px">6</div><div class="code m" style="top:193px">    opt = parse_opt()</div>
<div class="ln m" style="top:214.5px;color:#4b5059;font-size:12.3px">7</div><div class="code m" style="top:215px">    opt.data = <span class="s">&quot;../train/doro.yaml&quot;</span>  <span class="c"># <span class="z">数据集路径</span></span></div>
<div class="ln m" style="top:236.5px;color:#4b5059;font-size:12.3px">8</div><div class="code m" style="top:237px">    opt.weights = <span class="s">&quot;../yolov5s.pt&quot;</span>     <span class="c"># <span class="z">权重文件</span></span></div>
<div class="ln m" style="top:258.5px;color:#4b5059;font-size:12.3px">9</div><div class="code m" style="top:259px">    opt.imgsz = <span class="n">480</span>                <span class="c"># <span class="z">图像尺寸</span></span></div>
<div class="ln m" style="top:280.5px;color:#4b5059;font-size:12.3px">10</div><div class="code m" style="top:281px">    opt.batch_size = <span class="n">16</span>            <span class="c"># <span class="z">批量大小</span></span></div>
<div class="ln m" style="top:302.5px;color:#4b5059;font-size:12.3px">11</div><div class="code m" style="top:303px">    opt.epochs = <span class="n">100</span>               <span class="c"># <span class="z">训练轮次</span></span></div>
<div class="ln m" style="top:324.5px;color:#4b5059;font-size:12.3px">12</div><div class="code m" style="top:325px">    opt.nosave = <span class="k">False</span>             <span class="c"># <span class="z">允许保存检查点</span></span></div>
<div class="ln m" style="top:346.5px;color:#4b5059;font-size:12.3px">13</div><div class="code m" style="top:347px">    opt.save_period = <span class="n">20</span>           <span class="c"># <span class="z">每</span>20<span class="z">轮保存一次</span></span></div>
<div class="ln m" style="top:368.5px;color:#4b5059;font-size:12.3px">14</div><div class="code m" style="top:369px">    opt.cache = <span class="k">True</span>               <span class="c"># <span class="z">启用数据缓存</span></span></div>
<div class="ln m" style="top:390.5px;color:#4b5059;font-size:12.3px">15</div><div class="code m" style="top:391px">    opt.device = <span class="s">&quot;0&quot;</span>               <span class="c"># <span class="z">使用</span>GPU 0<span class="z">（若为</span>CPU<span class="z">则设为</span>&quot;cpu&quot;<span class="z">）</span></span></div>
<div class="ln m" style="top:412.5px;color:#4b5059;font-size:12.3px">16</div><div class="code m" style="top:413px">    opt.lr0 = <span class="n">0.01</span>                 <span class="c"># <span class="z">初始学习率</span></span></div>
<div class="ln m" style="top:434.5px;color:#a1a3ab;font-size:12.3px">17</div>
<div class="ln m" style="top:456.5px;color:#4b5059;font-size:12.3px">18</div><div class="code m" style="top:457px">    <span class="c"># <span class="z">启动训练</span></span></div>
<div class="ln m" style="top:478.5px;color:#4b5059;font-size:12.3px">19</div><div class="code m" style="top:479px">    main(opt)</div>
<div class="ln m" style="top:500.5px;color:#4b5059;font-size:12.3px">20</div>
<div class="ln m" style="top:522.5px;color:#4b5059;font-size:12.3px">21</div><div class="code m" style="top:523px"><span class="k">if</span> __name__ == <span class="s">&quot;__main__&quot;</span>:</div>
<div class="ln m" style="top:544.5px;color:#4b5059;font-size:12.3px">22</div><div class="code m" style="top:545px">    custom_train()</div>
<svg style="left:389.5px;top:526px" width="14" height="14" viewBox="0 0 14 14" fill="none"><path d="M1.8 1.2 L13 7 L1.8 12.8 Z" stroke="#57965c" stroke-width="1.4" stroke-linejoin="round"/></svg>
<div class="t " style="left:1811.5px;top:86px;color:#5a5d63;font-size:12.5px;letter-spacing:-0.346px;">正在分析...</div>
<!-- run panel -->
<div class="t " style="left:53px;top:794px;color:#dfe1e5;font-size:12.5px;font-weight:500;">运行</div>
<svg style="left:105.5px;top:796.5px" width="15" height="15" viewBox="0 0 16 16" fill="none"><g opacity="0.62"><path d="M7.9 0.6c-3.6 0-3.4 1.6-3.4 1.6v1.7h3.5v.6H3.1S0.6 4.2 0.6 8s2.2 3.6 2.2 3.6h1.3V9.9s-.1-2.2 2.1-2.2h3.6s2 0 2-2V2.500S12.200 0.600 7.900 0.600zM6 1.700a.65.65 0 1 1 0 1.300.65.65 0 0 1 0-1.300z" fill="#3d7cab"/><path d="M8.100 15.400c3.600 0 3.400-1.600 3.400-1.600v-1.700H8v-.6h4.900s2.500.300 2.500-3.500-2.200-3.600-2.200-3.600h-1.300v1.700s.1 2.200-2.100 2.200H6.200s-2 0-2 2v3.200s-.4 1.900 3.900 1.900zm1.900-1.100a.65.65 0 1 1 0-1.300.65.65 0 0 1 0 1.300z" fill="#e0b030"/></g></svg>
<div class="t " style="left:125px;top:795px;color:#dfe1e5;letter-spacing:-0.148px;">test_train</div>
<div class="a" style="left:93px;top:821px;width:115px;height:3px;background:#5a5d63;border-radius:2px"></div>
<svg style="left:189px;top:800px" width="8" height="8" viewBox="0 0 8 8" fill="none"><path d="M0.5 0.5 L7.5 7.5 M7.5 0.5 L0.5 7.5" stroke="#868a91" stroke-width="1"/></svg>
<div class="a" style="left:81px;top:835px;width:12px;height:12px;background:#58595c;border-radius:2px"></div>
<div class="a" style="left:41px;top:858px;width:38px;height:1px;background:#1e1f22;"></div>
<div class="a" style="left:103px;top:831px;width:1px;height:20px;background:#43454a;"></div>
<svg style="left:118px;top:833px" width="4" height="16" viewBox="0 0 4 16" fill="none"><rect x="1" y="1.800" width="2" height="2" fill="#ced0d6"/><rect x="1" y="7.100" width="2" height="2" fill="#ced0d6"/><rect x="1" y="12.200" width="2" height="2" fill="#ced0d6"/></svg>
<div class="a" style="left:79px;top:858px;width:1800px;height:152px;overflow:hidden">
<div class="con m" style="left:12px;top:-14px">      90/99      2.57G    0.02162    0.01125          0         26        480: 100%|██████████| 5/5 [00:01&lt;00:00,  4.05it/s]</div>
<div class="con m" style="left:12px;top:9px">                 Class     Images  Instances          P          R      mAP50   mAP50-95: 100%|██████████| 3/3 [00:00&lt;00:00,  3.76it/s]</div>
<div class="con m" style="left:12px;top:31px">                   all         72         80      0.999          1      0.995      0.898</div>
<div class="con m" style="left:12px;top:75px">      Epoch    GPU_mem   box_loss   obj_loss   cls_loss  Instances       Size</div>
<div class="con m" style="left:12px;top:97px">  0%|          | 0/5 [00:00&lt;?, ?it/s]D:\Code\Python\test_doro\train.py:412: FutureWarning: `torch.cuda.amp.autocast(args...)` is deprecated. Please use `torch.amp.autocast(&#x27;cuda&#x27;, args...)` instead.</div>
<div class="con m" style="left:12px;top:119px">  with torch.cuda.amp.autocast(amp):</div>
<div class="con m" style="left:12px;top:141px">      91/99      2.57G    0.02085    0.00825          0         33        480:  20%|██        | 1/5 [00:00&lt;00:01,  3.91it/s]D:\Code\Python\test_doro\train.py:412: FutureWarning: `torch.cuda.amp.autocast(args...)` is deprecated. Please use `torch.amp.autocast(&#x27;cuda&#x27;, args...)` instead.</div>
<div class="a" style="left:13px;top:143px;width:558px;height:9px;background:rgba(120,122,128,0.55)"></div>
<div class="a" style="left:1791px;top:113px;width:7px;height:26px;background:#4d4f53"></div>
</div>
<!-- run gutter -->
<svg style="left:53px;top:833px" width="18" height="18" viewBox="0 0 18 18" fill="none"><g stroke="#ced0d6" stroke-width="1.2" fill="none" stroke-linecap="round" stroke-linejoin="round"><path d="M9.800 14.300A6 6 0 1 1 13.700 5.500M14 1.800V6H9.800"/></g></svg>
<svg style="left:61.3px;top:841px" width="8" height="8" viewBox="0 0 8 8" fill="none"><path d="M1 0.800L7.200 4.300L1 7.800Z" stroke="#5fad65" stroke-width="1.200" stroke-linejoin="round" fill="none"/></svg>
<svg style="left:52px;top:869px" width="16" height="16" viewBox="0 0 16 16" fill="none"><g stroke="#b4b8bf" stroke-width="1.2" fill="none" stroke-linecap="round" stroke-linejoin="round"><path d="M8 13.500V2.800M3.500 7L8 2.500L12.500 7"/></g></svg>
<svg style="left:52px;top:895px" width="16" height="16" viewBox="0 0 16 16" fill="none"><g stroke="#b4b8bf" stroke-width="1.2" fill="none" stroke-linecap="round" stroke-linejoin="round"><path d="M8 2.500V13.200M3.500 9L8 13.500L12.500 9"/></g></svg>
<svg style="left:52px;top:922px" width="16" height="16" viewBox="0 0 16 16" fill="none"><g stroke="#b4b8bf" stroke-width="1.1" fill="none" stroke-linecap="round" stroke-linejoin="round"><path d="M1.300 2.500H14.700M1.300 7.500H12.200a2.500 2.500 0 0 1 0 5H9M1.300 12.500H5M10.800 10.500L8.800 12.500L10.800 14.500"/></g></svg>
<svg style="left:52px;top:947px" width="16" height="16" viewBox="0 0 16 16" fill="none"><g stroke="#b4b8bf" stroke-width="1.1" fill="none" stroke-linecap="round" stroke-linejoin="round"><path d="M1.300 3.500H6M1.300 8H6M1.300 12.500H14.700M11 2.500V9.500M8 6.800L11 9.800L14 6.800"/></g></svg>
<svg style="left:57.2px;top:991.8px" width="5" height="9" viewBox="0 0 5 9" fill="none"><path d="M0.5 0.5 L4.3 4.5 L0.5 8.5" stroke="#9da0a8" stroke-width="1.2"/></svg>
<!-- status bar -->
<div class="a" style="left:14px;top:1021px;width:8px;height:8px;border:1.300px solid #548af7;border-radius:2px;background:#25324d"></div>
<div class="t " style="left:26.5px;top:1015px;color:#a8abb2;letter-spacing:0.033px;">test_doro</div>
<svg style="left:91.0px;top:1019.5px" width="5" height="9" viewBox="0 0 5 9" fill="none"><path d="M0.5 0.5 L4.3 4.5 L0.5 8.5" stroke="#868a91" stroke-width="1.2"/></svg>
<div class="t " style="left:105px;top:1015px;color:#a8abb2;">src</div>
<svg style="left:132.0px;top:1019.5px" width="5" height="9" viewBox="0 0 5 9" fill="none"><path d="M0.5 0.5 L4.3 4.5 L0.5 8.5" stroke="#868a91" stroke-width="1.2"/></svg>
<svg style="left:146.5px;top:1016.5px" width="15" height="15" viewBox="0 0 16 16" fill="none"><g opacity="1.0"><path d="M7.9 0.6c-3.6 0-3.4 1.6-3.4 1.6v1.7h3.5v.6H3.1S0.6 4.2 0.6 8s2.2 3.6 2.2 3.6h1.3V9.9s-.1-2.2 2.1-2.2h3.6s2 0 2-2V2.500S12.200 0.600 7.900 0.600zM6 1.700a.65.65 0 1 1 0 1.300.65.65 0 0 1 0-1.300z" fill="#3d7cab"/><path d="M8.100 15.400c3.600 0 3.400-1.600 3.400-1.600v-1.700H8v-.6h4.900s2.500.300 2.500-3.500-2.200-3.600-2.200-3.600h-1.300v1.700s.1 2.200-2.100 2.200H6.200s-2 0-2 2v3.200s-.4 1.900 3.900 1.900zm1.900-1.100a.65.65 0 1 1 0-1.300.65.65 0 0 1 0 1.300z" fill="#e0b030"/></g></svg>
<div class="t " style="left:166px;top:1015px;color:#a8abb2;letter-spacing:-0.141px;">test_train.py</div>
<div class="t " style="left:1599px;top:1015px;color:#a8abb2;letter-spacing:-0.578px;">17:1</div>
<div class="t " style="left:1639px;top:1015px;color:#a8abb2;letter-spacing:-1.363px;">CRLF</div>
<div class="t " style="left:1683px;top:1015px;color:#a8abb2;letter-spacing:-0.569px;">UTF-8</div>
<div class="a" style="left:1740px;top:1014px;width:179px;height:30px;background:#fff;border:1px solid #b9d2f3;border-radius:4px"></div>
<div class="a" style="left:1720px;top:1011px;width:29px;height:34px;background:linear-gradient(180deg,#ff6a2a,#f4461a);border-radius:5px;transform:rotate(-12deg)"></div>
<div class="a" style="left:1722px;top:1008px;width:28px;height:34px;color:#fff;font-size:27px;font-weight:bold;font-style:italic;line-height:36px;text-align:center;transform:rotate(-10deg) scaleX(1.45)">S</div>
<div class="a" style="left:1755.500px;top:1017px;font-size:15px;line-height:20px;font-weight:bold;color:#0b6cd8;font-family:'Noto Sans CJK SC',sans-serif">中</div>
<div class="a" style="left:1782.500px;top:1021.500px;width:5px;height:5px;border:1.500px solid #0b6cd8;border-radius:3px"></div><div class="a" style="left:1789px;top:1019px;font-size:16px;line-height:16px;font-weight:bold;color:#0b6cd8">,</div>
<svg style="left:1804px;top:1018px" width="14" height="17" viewBox="0 0 14 17" fill="none"><rect x="4" y="1" width="6" height="10" rx="3" fill="#0b6cd8"/><path d="M1.200 8a5.800 5.800 0 0 0 11.600 0M7 13.800V16M4.500 16H9.500" stroke="#0b6cd8" stroke-width="1.500" fill="none"/></svg>
<svg style="left:1828px;top:1021px" width="15" height="12" viewBox="0 0 15 12" fill="none"><rect x="0" y="0" width="15" height="12" rx="2" fill="#0b6cd8"/><path d="M2.600 3.300h1.400M5.400 3.300h1.400M8.200 3.300h1.400M11 3.300h1.400M2.600 6h1.400M5.400 6h1.400M8.200 6h1.400M11 6h1.400M2.600 8.800h1.400M5.400 8.800h4.200M11 8.800h1.400" stroke="#fff" stroke-width="1.500"/></svg>
<svg style="left:1851px;top:1020px" width="16" height="15" viewBox="0 0 16 15" fill="none"><defs><linearGradient id="sh" x1="0" y1="0" x2="0.300" y2="1"><stop offset="0" stop-color="#f0506e"/><stop offset="0.550" stop-color="#a04ff0"/><stop offset="1" stop-color="#40a0ff"/></linearGradient></defs><path d="M1 2.500L4.800 1c.8 1.300 4.800 1.300 5.600 0L14.500 2.500L13.500 6.500L11.500 6V14H4V6L2 6.500Z" fill="url(#sh)"/></svg>
<div class="a" style="left:1863.500px;top:1015.500px;width:6px;height:6px;border-radius:3px;background:#f4502f"></div>
<svg style="left:1877px;top:1021px" width="14" height="14" viewBox="0 0 14 14" fill="none"><rect x="0" y="0" width="5.800" height="5.800" rx="1.500" fill="#0b6cd8"/><rect x="0" y="7.400" width="5.800" height="5.800" rx="1.500" fill="#0b6cd8"/><rect x="7.400" y="7.400" width="5.800" height="5.800" rx="1.500" fill="#0b6cd8"/><rect x="8.100" y="0.700" width="4.400" height="4.400" rx="1.200" stroke="#0b6cd8" stroke-width="1.400" fill="none"/></svg>
<div class="a" style="left:1897px;top:1017px;width:21px;height:21px;border-radius:11px;background:#fdf4f2;border:1px solid #f1d9d6"></div>
<svg style="left:1899px;top:1021px" width="17" height="12" viewBox="0 0 17 12" fill="none"><path d="M0.500 3.500C3 1 11 0.500 14.500 1.800L13.800 5.500C10 4.800 4 5 1 7Z" fill="#f07820"/><path d="M2 8c2 2.500 6 3 9 1.500" stroke="#5a2a10" stroke-width="1.300" fill="none"/><path d="M4 5.200l1.500.5M10 4.700l1.500-.4" stroke="#3a1a08" stroke-width="1"/></svg>
<svg style="left:1911px;top:1015px" width="8" height="8" viewBox="0 0 8 8" fill="none"><path d="M4 0L5 3L8 4L5 5L4 8L3 5L0 4L3 3Z" fill="#f7d23a"/></svg>
</body></html>
